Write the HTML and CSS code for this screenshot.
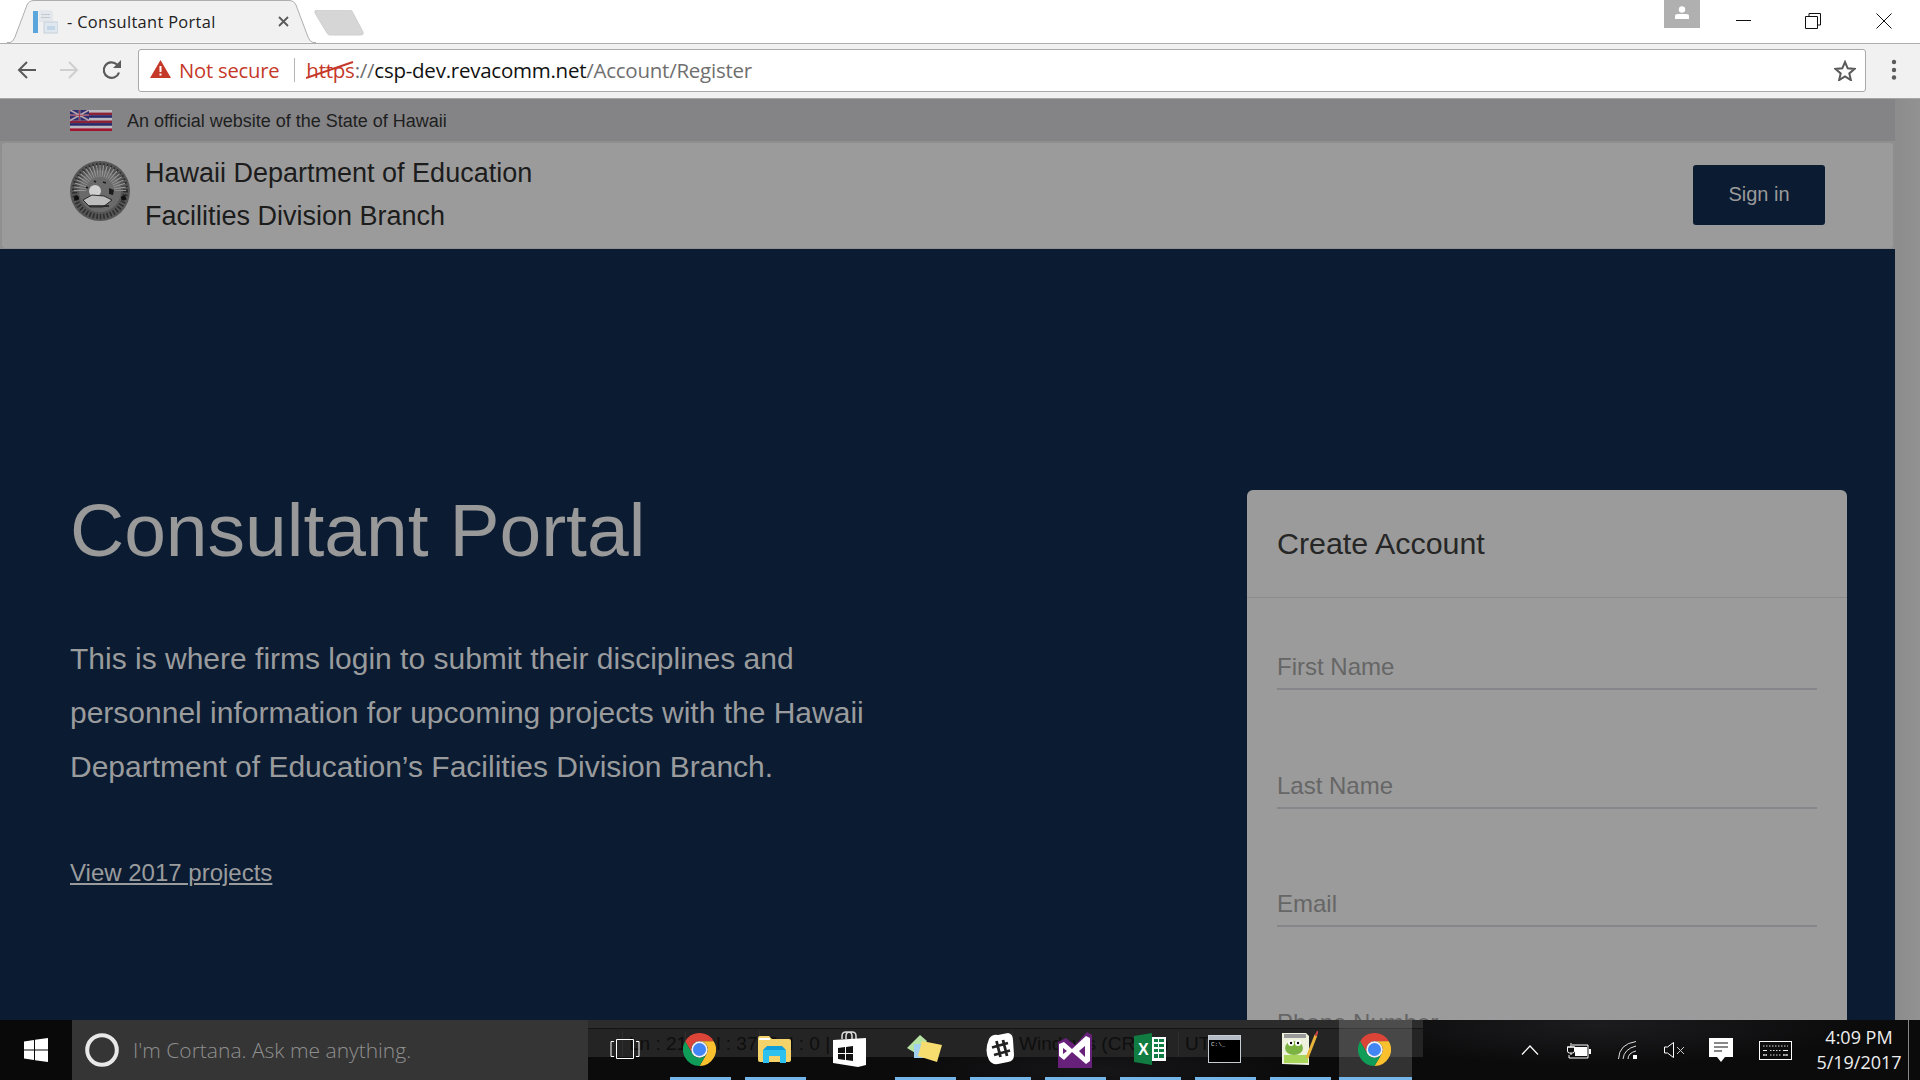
FILE: index.html
```html
<!DOCTYPE html>
<html lang="en">
<head>
<meta charset="utf-8">
<title>Consultant Portal</title>
<link rel="stylesheet" href="styles.css">
</head>
<body>
<svg class="defs" width="0" height="0" aria-hidden="true">
  <symbol id="chrome" viewBox="0 0 48 48">
    <path fill="#db4437" d="M3.2 12A24 24 0 0 1 44.8 12H24a12 12 0 0 0-10.4 18z"/>
    <path fill="#fbc02d" d="M44.8 12A24 24 0 0 1 24 48L34.4 30A12 12 0 0 0 24 12z"/>
    <path fill="#0f9d58" d="M24 48A24 24 0 0 1 3.2 12L13.6 30A12 12 0 0 0 34.4 30z"/>
    <circle cx="24" cy="24" r="12" fill="#f1f1f1"/>
    <circle cx="24" cy="24" r="9.5" fill="#4285f4"/>
  </symbol>
</svg>
<div class="screen">
  <div class="browser">
    <div class="tabstrip">
      <div class="tab">
        <svg class="tab-shape" width="309" height="43" viewBox="0 0 309 43"><path d="M0 42.5h3Q6 42 8 37L20 5Q22 .5 27 .5H282Q287 .5 289 5L301 37Q303 42 306 42.5h3" fill="#f1f1f1" stroke="#aeaeae"/></svg>
        <svg class="favicon" width="25" height="24" viewBox="0 0 25 24"><rect x="0" y="1" width="5" height="22" fill="#5aa5dc"/><path d="M6 0h12l2 2v10H6z" fill="#e4e8ec"/><rect x="8" y="4" width="9" height="1" fill="#c2c9d0"/><rect x="8" y="7" width="9" height="1" fill="#c2c9d0"/><rect x="11" y="12" width="14" height="11" fill="#dfe7ef" stroke="#c8d2dc"/><rect x="14" y="16" width="8" height="4" fill="#c3d6e8"/></svg>
        <span class="tab-title">- Consultant Portal</span>
        <svg class="tab-close" width="11" height="11" viewBox="0 0 11 11"><path d="M1 1l9 9M10 1l-9 9" stroke="#5a5a5a" stroke-width="1.8"/></svg>
      </div>
      <svg class="newtab" width="50" height="26" viewBox="0 0 50 26"><path d="M1 3Q0 0 3 0H36Q38 0 39 3L49 22Q50 25 47 25H16Q14 25 13 23z" fill="#d6d6d6" stroke="#cfcfcf"/></svg>
      <div class="winctl">
        <div class="avatar"><svg width="14" height="13" viewBox="0 0 14 13"><circle cx="7" cy="3.5" r="3.2" fill="#fff"/><path d="M0 13V10Q0 8 3 8h8q3 0 3 2v3z" fill="#fff"/></svg></div>
        <svg class="w-min" width="16" height="2" viewBox="0 0 16 2"><rect width="15" height="1" y="0" fill="#111"/></svg>
        <svg class="w-max" width="16" height="16" viewBox="0 0 16 16"><path d="M4 3V.5h11.500V12H12.500M.5 3.500h12v12H.5z" fill="none" stroke="#111"/></svg>
        <svg class="w-close" width="16" height="16" viewBox="0 0 16 16"><path d="M.5.5l15 15M15.500.5l-15 15" stroke="#111"/></svg>
      </div>
    </div>
    <div class="toolbar">
      <svg class="nav nav-back" width="20" height="20" viewBox="0 0 20 20"><path d="M19 10H3M10 2l-8 8 8 8" fill="none" stroke="#5a5a5a" stroke-width="2"/></svg>
      <svg class="nav nav-fwd" width="20" height="20" viewBox="0 0 20 20"><path d="M1 10h16M10 2l8 8-8 8" fill="none" stroke="#cfcfcf" stroke-width="2"/></svg>
      <svg class="nav nav-reload" width="22" height="22" viewBox="0 0 22 22"><path d="M18 13.500A7.800 7.800 0 1 1 16 5.500" fill="none" stroke="#5a5a5a" stroke-width="2.200"/><path d="M12 9h8V1z" fill="#5a5a5a"/></svg>
      <div class="omnibox">
        <svg class="warn" width="21" height="18" viewBox="0 0 21 18"><path d="M10.500 0L21 18H0z" fill="#c53929"/><rect x="9.500" y="6" width="2" height="6" fill="#fff"/><rect x="9.500" y="13.500" width="2" height="2" fill="#fff"/></svg>
        <span class="notsecure">Not secure</span>
        <span class="omni-sep"></span>
        <span class="url"><span class="scheme">https<svg class="strike" width="48" height="18" viewBox="0 0 48 18"><path d="M0 17L47 1" stroke="#c53929" stroke-width="2"/></svg></span><span class="dim">://</span>csp-dev.revacomm.net<span class="dim">/Account/Register</span></span>
        <svg class="star" width="22" height="21" viewBox="0 0 22 21"><path d="M11 2l2.700 6.300 6.800.6-5.200 4.500 1.600 6.700L11 16.500l-5.900 3.600 1.600-6.700L1.500 8.900l6.800-.6z" fill="none" stroke="#5a5a5a" stroke-width="2"/></svg>
      </div>
      <svg class="menu" width="6" height="22" viewBox="0 0 6 22"><circle cx="3" cy="3" r="2.200" fill="#5a5a5a"/><circle cx="3" cy="11" r="2.200" fill="#5a5a5a"/><circle cx="3" cy="18.500" r="2.200" fill="#5a5a5a"/></svg>
    </div>
  </div>

  <div class="viewport">
    <main class="page">
      <div class="official">
        <svg class="flag" width="42" height="21" viewBox="0 0 42 21">
          <rect width="42" height="21" fill="#b9b9bf"/>
          <rect y="2.600" width="42" height="2.600" fill="#8c2236"/>
          <rect y="5.200" width="42" height="2.600" fill="#27296b"/>
          <rect y="10.500" width="42" height="2.600" fill="#8c2236"/>
          <rect y="13.100" width="42" height="2.600" fill="#27296b"/>
          <rect y="18.400" width="42" height="2.600" fill="#a2152f"/>
          <rect width="19" height="10.500" fill="#2d2f70"/>
          <path d="M0 0l19 10.500M19 0L0 10.500M9.500 0v10.500M0 5.250h19" stroke="#b9a5ae" stroke-width="1.600"/>
          <path d="M9.500 0v10.500M0 5.250h19" stroke="#992840" stroke-width=".8"/>
        </svg>
        <span class="official-text">An official website of the State of Hawaii</span>
      </div>
      <header class="site-head">
        <svg class="seal" width="60" height="60" viewBox="0 0 60 60">
          <circle cx="30" cy="30" r="30" fill="#565656"/>
          <circle cx="30" cy="30" r="25.500" fill="none" stroke="#2c2c2c" stroke-width="5" stroke-dasharray="1.500 2"/>
          <circle cx="30" cy="30" r="21" fill="#6a6a6a"/>
          <path d="M10 30a20 20 0 0 1 40 0" fill="none" stroke="#9a9a9a" stroke-width="12" stroke-dasharray="1 1.800"/>
          <circle cx="25" cy="30" r="6" fill="#d0d0d0"/>
          <path d="M13 39l9-5 12 1 8 4-9 7H20z" fill="#bdbdbd" stroke="#2a2a2a"/>
          <path d="M39 27l5 2-1 5-4-1z" fill="#1b1b1b"/>
          <path d="M33 21l3 1M24 20l2 1M16 26l2 1M19 45h20" stroke="#1b1b1b" stroke-width="1.500"/>
          <circle cx="6.500" cy="37" r="2.500" fill="#111"/><circle cx="53.500" cy="37" r="2.500" fill="#111"/>
        </svg>
        <div class="site-name"><div>Hawaii Department of Education</div><div>Facilities Division Branch</div></div>
        <a class="signin">Sign in</a>
      </header>
      <section class="hero">
        <div class="intro">
          <h1>Consultant Portal</h1>
          <p>This is where firms login to submit their disciplines and personnel information for upcoming projects with the Hawaii Department of Education’s Facilities Division Branch.</p>
          <a class="projects">View 2017 projects</a>
        </div>
        <form class="card">
          <h2>Create Account</h2>
          <div class="fields">
            <div class="field"><span>First Name</span></div>
            <div class="field"><span>Last Name</span></div>
            <div class="field"><span>Email</span></div>
            <div class="field"><span>Phone Number</span></div>
          </div>
        </form>
      </section>
    </main>
    <div class="scrollbar"></div>
  </div>

  <footer class="taskbar">
    <div class="ghost">
      <span class="g-ln">Ln : 21</span><span class="g-col">Col : 37</span><span class="g-sel">Sel : 0 |</span><span class="g-eol">Windows (CR LF)</span><span class="g-enc">UTF-8</span>
    </div>
    <div class="start"><svg width="24" height="24" viewBox="0 0 24 24"><path d="M0 3.400l10-1.400v9.400H0zM11 1.800L24 0v11.400H11zM0 12.600h10V22L0 20.600zM11 12.600h13V24l-13-1.800z" fill="#fff"/></svg></div>
    <div class="cortana">
      <svg width="34" height="34" viewBox="0 0 34 34"><circle cx="17" cy="17" r="14.800" fill="none" stroke="#e8e8e8" stroke-width="4"/></svg>
      <span>I'm Cortana. Ask me anything.</span>
    </div>
    <div class="tasks">
      <div class="task"><svg width="30" height="20" viewBox="0 0 30 20"><path d="M4 2.500H1v15h3M26 2.500h3v15h-3M6.500.5h17v19h-17z" fill="none" stroke="#fff"/></svg></div>
      <div class="task on"><svg width="33" height="33"><use href="#chrome"/></svg></div>
      <div class="task on"><svg width="33" height="27" viewBox="0 0 33 27"><path d="M0 2Q0 0 2 0h9l3 3h17q2 0 2 2v19q0 2-2 2H2q-2 0-2-2z" fill="#f3d36a"/><rect x="1" y="2" width="11" height="2" fill="#fff"/><path d="M5 14h23v13h-6v-7H11v7H5z" fill="#2cc1ee"/><path d="M9 10h15l4 4H5z" fill="#0fa0dc"/></svg></div>
      <div class="task"><svg width="33" height="36" viewBox="0 0 33 36"><path d="M9 8V5q0-4 4-4h2q4 0 4 4v4M13 8V5q0-4 4-4h2q4 0 4 4v4" fill="none" stroke="#ddd" stroke-width="1.500"/><path d="M0 9l33-2v27l-8 2-25-4z" fill="#fff"/><path d="M5 17l7-1v6H5zM13 16l7-1v7h-7zM5 23h7v6l-7-1zM13 23h7v7l-7-1z" fill="#111"/></svg></div>
      <div class="task on"><svg width="36" height="28" viewBox="0 0 36 28"><path d="M0 13L13 0l7 6-10 13z" fill="#b6e3a2"/><path d="M7 9h14v14H7z" fill="#a2d1f0"/><path d="M15 6l20 4-5 17-19-6z" fill="#f7dc6f"/></svg></div>
      <div class="task on"><svg width="28" height="32" viewBox="0 0 28 32"><path d="M3 6Q6 1 12 2l10-2q5 1 5 7l1 15q0 6-6 7l-10 2q-6 1-9-4-5-9 0-21z" fill="#fff"/><path d="M10.500 8l4 16M17 7l4 16M6 14.500l16-4.500M8 22l16-4.500" stroke="#222" stroke-width="2.800" fill="none"/></svg></div>
      <div class="task on"><svg width="36" height="37" viewBox="0 0 36 37"><path d="M1 11l8-4 9 7L30 1l5 3v33H1z" fill="#68217a"/><path d="M2 13l5-2 8 7L29 5l4 2v23l-4 3-14-12-8 8-5-4z" fill="#fff"/><path d="M6 17l4 3-4 3zM22 20l6-5v11z" fill="#68217a"/></svg></div>
      <div class="task on"><svg width="32" height="32" viewBox="0 0 32 32"><path d="M0 3l18-3v32L0 29z" fill="#107c41"/><rect x="18" y="4" width="14" height="24" fill="#fff"/><path d="M20 6h4v3h-4zM25 6h5v3h-5zM20 11h4v3h-4zM25 11h5v3h-5zM20 16h4v3h-4zM25 16h5v3h-5zM20 21h4v4h-4zM25 21h5v4h-5z" fill="#107c41"/><text x="4" y="22" class="xl">X</text></svg></div>
      <div class="task on"><svg width="33" height="28" viewBox="0 0 33 28"><rect x=".5" y=".5" width="32" height="27" fill="#000" stroke="#c8cdd4"/><rect x="1" y="1" width="31" height="4" fill="#b5bcc5"/><text x="3" y="11" class="cmd">C:\_</text></svg></div>
      <div class="task on last"><svg width="36" height="36" viewBox="0 0 36 36"><path d="M0 2h24l3 3v29L0 33z" fill="#eef2dc"/><rect x="2" y="3" width="22" height="4" fill="#9a9a9a"/><rect x="2" y="24" width="24" height="8" fill="#a9d65a"/><ellipse cx="12" cy="17" rx="9" ry="7" fill="#7cb342"/><circle cx="9" cy="12" r="3" fill="#fff"/><circle cx="16" cy="12" r="3" fill="#fff"/><circle cx="9" cy="12" r="1.200"/><circle cx="16" cy="12" r="1.200"/><path d="M25 27L34 4" stroke="#e8b33a" stroke-width="3"/><path d="M33.500 5L36 0" stroke="#c44" stroke-width="2"/></svg></div>
      <div class="task active"><svg width="33" height="33"><use href="#chrome"/></svg></div>
    </div>
    <div class="tray">
      <svg class="t-caret" width="18" height="10" viewBox="0 0 18 10"><path d="M1 9.500l8-8.500 8 8.500" fill="none" stroke="#fff" stroke-width="1.200"/></svg>
      <svg class="t-batt" width="25" height="17" viewBox="0 0 25 17"><path d="M5 5V1M1.500 5v4q0 2 2 2h3q2 0 2-2V5zM1 5h8M5 11v2" fill="none" stroke="#fff"/><path d="M6 3h16v13H3v-3" fill="none" stroke="#fff"/><rect x="9" y="5" width="12" height="9" fill="#fff"/><rect x="23" y="7" width="2" height="5" fill="#fff"/></svg>
      <svg class="t-wifi" width="20" height="18" viewBox="0 0 20 18"><path d="M.5 18Q1 3 18 .5M5 18Q6 8 18 5M10 18q0-6 8-8" fill="none" stroke="#ddd"/><rect x="15" y="14" width="4" height="4" fill="#fff"/></svg>
      <svg class="t-vol" width="21" height="16" viewBox="0 0 21 16"><path d="M.5 5h3l6-4.500v15l-6-4.500h-3z" fill="none" stroke="#fff"/><path d="M13 5l7 7M20 5l-7 7" stroke="#ccc"/></svg>
      <svg class="t-note" width="24" height="24" viewBox="0 0 24 24"><path d="M0 0h24v19h-8l-4 5-4-5H0z" fill="#fff"/><path d="M5 5h14M5 9h14M5 13h8" stroke="#111"/></svg>
      <svg class="t-kbd" width="33" height="19" viewBox="0 0 33 19"><rect x=".5" y=".5" width="32" height="18" fill="none" stroke="#fff"/><path d="M4 5h25M4 9.500h4M11 9.500h11M24 9.500h5M4 14h4M11 14h11M24 14h5" stroke="#ddd" stroke-dasharray="1.500 1.500"/><path d="M4 14h4M24 14h5M4 9.500h4M24 9.500h5" stroke="#eee"/></svg>
      <div class="clock"><div>4:09 PM</div><div>5/19/2017</div></div>
      <div class="peek"></div>
    </div>
  </footer>
</div>
</body>
</html>
```

FILE: styles.css
```css
* { box-sizing: border-box; }
html, body { margin: 0; padding: 0; height: 100%; overflow: hidden; }
body { font-family: "Liberation Sans", Arial, sans-serif; background: #0a1b32; }
.defs { position: absolute; }
.screen { width: 1920px; height: 1080px; display: flex; flex-direction: column; overflow: hidden; }

/* browser chrome */
.browser { flex: 0 0 99px; display: flex; flex-direction: column; font-family: "Open Sans", sans-serif; }
.tabstrip { flex: 0 0 43px; background: #fff; border-bottom: 1px solid #aeaeae; display: flex; align-items: flex-start; padding-left: 7px; }
.tab { position: relative; width: 309px; height: 43px; display: flex; align-items: center; padding-left: 26px; }
.tab-shape { position: absolute; left: 0; top: 0; }
.favicon, .tab-title, .tab-close { position: relative; }
.tab-title { margin-left: 9px; font-size: 16.400px; letter-spacing: .02em; color: #222; white-space: nowrap; width: 209px; margin-top: -1px; }
.tab-close { margin-top: -1px; margin-left: 2px; }
.newtab { margin: 10px 0 0 -2px; }
.winctl { margin-left: auto; display: flex; align-items: flex-start; height: 42px; padding-right: 28px; }
.avatar { width: 36px; height: 28px; background: #b0b0b0; display: flex; justify-content: center; padding-top: 6px; }
.w-min { margin: 20px 0 0 36px; }
.w-max { margin: 13px 0 0 53px; }
.w-close { margin: 13px 0 0 55px; }
.toolbar { flex: 1; background: #f1f1f1; border-bottom: 1px solid #a6a6a6; display: flex; align-items: center; padding: 0 0 2px 17px; }
.nav-fwd { margin-left: 22px; }
.nav-reload { margin-left: 22px; margin-top: -1px; }
.omnibox { width: 1728px; height: 43px; margin-left: 15px; background: #fff; border: 1px solid #a9a9a9; border-radius: 3px; display: flex; align-items: center; padding-left: 11px; }
.warn { flex: none; margin-top: -2px; }
.notsecure { margin-left: 8px; font-size: 20.200px; color: #c53929; letter-spacing: -.01em; white-space: nowrap; }
.omni-sep { width: 1px; height: 24px; background: #b5b5b5; margin: 0 11px 0 15px; }
.url { font-size: 20.500px; color: #111; white-space: nowrap; letter-spacing: -.012em; }
.scheme { position: relative; color: #c53929; }
.strike { position: absolute; left: 0; top: 5px; }
.dim { color: #6f6f6f; }
.star { margin-left: auto; margin-right: 9px; }
.menu { margin-left: 25px; }

/* page */
.viewport { flex: 0 0 921px; display: flex; overflow: hidden; }
.page { flex: 1; min-width: 0; display: flex; flex-direction: column; background: #8f8f8f; }
.scrollbar { flex: 0 0 25px; background: linear-gradient(90deg, #8c8c8c, #929292); }
.official { flex: 0 0 42px; background: #848486; display: flex; align-items: center; padding: 1px 0 0 70px; gap: 15px; }
.official-text { font-size: 18px; color: #1e1e1e; margin-top: 1px; }
.site-head { flex: 0 0 108px; background: #9b9b9b; border: 2px solid #8f8f8f; border-bottom: 1px solid #8f8f8f; border-radius: 5px; display: flex; align-items: center; padding: 0 68px 0 68px; }
.seal { flex: none; margin-top: -10px; }
.site-name { margin-left: 15px; margin-top: -1px; font-size: 27px; line-height: 43px; color: #1c1c1c; }
.signin { margin: -2px 0 0 auto; width: 132px; height: 60px; background: #0a1b32; color: #9a9a9a; font-size: 20px; border-radius: 3px; display: flex; align-items: center; justify-content: center; }
.hero { flex: 1; background: #0a1b32; display: flex; justify-content: space-between; padding: 236px 48px 0 70px; min-height: 0; }
.intro { width: 800px; color: #9a9b9d; }
h1 { margin: 0; font-weight: 400; font-size: 75px; line-height: 90px; color: #999; white-space: nowrap; }
.intro p { margin: 57px 0 0; font-size: 30px; line-height: 54px; }
.projects { display: inline-block; margin-top: 64px; font-size: 24px; line-height: 30px; text-decoration: underline; }
.card { width: 600px; height: 900px; margin-top: 5px; background: #9b9b9b; border-radius: 6px 6px 0 0; flex: none; }
h2 { margin: 0; height: 108px; border-bottom: 1px solid #8b8b90; padding: 0 30px; display: flex; align-items: center; font-weight: 400; font-size: 30.400px; color: #262626; }
.fields { padding: 0 30px; }
.field { height: 118.500px; border-bottom: 2px solid #86868a; display: flex; align-items: flex-end; padding: 0 0 7px 0; font-size: 24px; line-height: 28px; color: #666; }
.field:nth-child(1) { height: 92px; }

/* taskbar */
.taskbar { flex: 0 0 60px; position: relative; display: flex; background:
  radial-gradient(ellipse 260px 40px at 1600px 5px, #1c1c1e, transparent),
  radial-gradient(ellipse 200px 30px at 1100px 50px, #161618, transparent),
  #0b0b0c; font-family: "Open Sans", sans-serif; }
.ghost { position: absolute; left: 588px; top: 0; width: 835px; height: 37px; background: linear-gradient(#2c2c2c 0 8px, #151515 8px 9px, #242424 9px); color: #0e0e0e; font-family: "Liberation Sans", sans-serif; font-size: 19px; }
.ghost span { position: absolute; top: 11px; line-height: 26px; white-space: nowrap; border-left: 1px solid #2f2f2f; padding-left: 6px; }
.g-ln { left: 34px; } .g-col { left: 97px; } .g-sel { left: 171px; } .g-eol { left: 424px; } .g-enc { left: 590px; }
.start { flex: 0 0 72px; display: flex; align-items: center; justify-content: center; position: relative; padding-bottom: 1px; background: #090909; }
.cortana { flex: 0 0 516px; background: #353535; display: flex; align-items: center; padding-left: 13px; gap: 14px; color: #8f8f8f; font-size: 21px; position: relative; font-weight: 300; }
.tasks { position: relative; display: flex; padding-left: 7px; }
.task { width: 61px; height: 60px; margin-right: 14px; border-bottom: 3px solid transparent; display: flex; align-items: center; justify-content: center; padding: 1px 2px 0 0; }
.task.on { border-bottom-color: #74b6ea; }
.task.last { margin-right: 8px; }
.task.active { width: 73px; margin-right: 0; background: rgba(255,255,255,.16); border-bottom-color: #74b6ea; }
.xl { font: 700 16px "Liberation Sans", sans-serif; fill: #fff; }
.cmd { font: 6px "Liberation Mono", monospace; fill: #ddd; }
.tray { position: relative; flex: 1; display: flex; align-items: center; padding-left: 109px; color: #eee; }
.t-batt { margin-left: 27px; } .t-wifi { margin-left: 27px; } .t-vol { margin-left: 26px; } .t-note { margin-left: 24px; } .t-kbd { margin-left: 26px; }
.clock { margin-left: 23px; width: 88px; font-size: 18px; line-height: 25px; text-align: center; white-space: nowrap; }
.peek { width: 1px; height: 60px; background: #888; margin-left: 5px; }
```
